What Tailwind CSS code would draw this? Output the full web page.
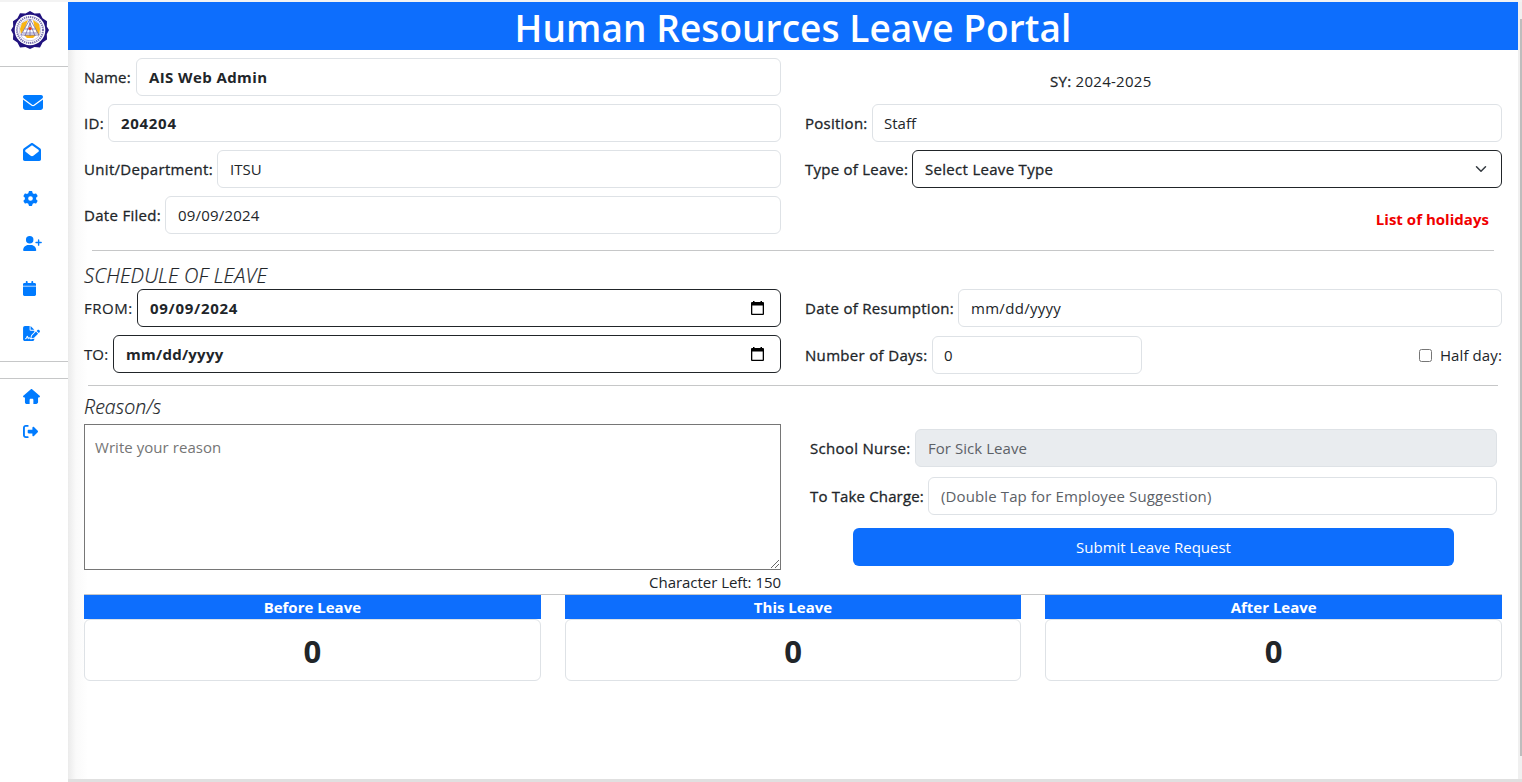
<!DOCTYPE html>
<html lang="en">
<head>
<meta charset="utf-8">
<title>Human Resources Leave Portal</title>
<script src="https://cdn.jsdelivr.net/npm/@tailwindcss/browser@4"></script>
</head>
<body class="h-[782px] w-[1522px] overflow-hidden bg-white font-['Open_Sans','Noto_Sans',sans-serif] text-[15px] leading-6 text-[#212529]">
<div class="flex h-full">
  <aside class="flex w-[68px] shrink-0 flex-col border-t-2 border-[#f3f3f3]">
    <div class="flex h-[65px] items-start border-b border-[#c6c7c8] pt-[9px] pl-[11px]">
      <svg class="size-[38px]" viewBox="0 0 38 38">
        <path fill="#21127f" d="M19 0l4.500 2.600 5.500-.3 2.600 4.900 4.400 3-.2 5.300L38 19l-2.200 4.200.2 5.300-4.400 3-2.600 4.900-5.500-.3L19 38l-4.500-1.900-5.500.3-2.600-4.900-4.400-3 .2-5.300L0 19l2.200-3.500-.2-5.300 4.400-3L9 2.300l5.500.3z"/>
        <circle cx="19" cy="19" r="15.300" fill="#fff"/>
        <circle cx="19" cy="19" r="13" fill="none" stroke="#7a72b0" stroke-width="2" stroke-dasharray="1.300 .8"/>
        <circle cx="19" cy="19" r="10.800" fill="#fff" stroke="#a49dcb" stroke-width=".6"/>
        <path fill="#f9b515" d="M11 12l6-3-3 8-4 6-1-5zM22 9l6 4 1 5-1 7-3-5-2-6zM13 24h12l-3 3h-6z"/>
        <path fill="none" stroke="#7269aa" stroke-width=".8" d="M19 8l-9 16h18zM19 9v16M14 18h10M12 22h14M19 12l-5 13M19 12l5 13"/>
        <circle cx="19" cy="17.500" r="1.600" fill="#e5331d"/>
      </svg>
    </div>
    <nav class="flex h-[295px] flex-col items-start border-b border-[#c6c7c8] pt-7 pl-[23px] text-[#007bff]">
      <svg class="h-[15px] w-5" viewBox="0 64 512 384" preserveAspectRatio="none" fill="currentColor"><path d="M48 64C21.500 64 0 85.500 0 112c0 15.100 7.100 29.300 19.200 38.400L236.800 313.600c11.400 8.500 27 8.500 38.400 0L492.800 150.400c12.100-9.100 19.200-23.300 19.200-38.400c0-26.500-21.500-48-48-48H48zM0 176V384c0 35.300 28.700 64 64 64H448c35.300 0 64-28.700 64-64V176L294.400 339.200c-22.800 17.100-54 17.100-76.800 0L0 176z"/></svg>
      <svg class="mt-[33px] size-[18px]" viewBox="0 0 512 512" fill="currentColor"><path d="M255.400 0c-9 0-18 2.500-26 8L28 148C10 160 0 180 0 202V464c0 26 22 48 48 48H464c26 0 48-22 48-48V202c0-22-10-42-28-54L282 8c-8-5-17-8-26.600-8zM256 64L448 198v44L294 366c-22 18-54 18-76 0L64 242V198z"/></svg>
      <svg class="mt-[30px] size-[15px]" viewBox="0 0 512 512" fill="currentColor"><path d="M495.900 166.600c3.200 8.700 .5 18.400-6.400 24.600l-43.300 39.400c1.100 8.300 1.700 16.800 1.700 25.400s-.6 17.100-1.700 25.400l43.300 39.400c6.900 6.200 9.600 15.900 6.400 24.600c-4.400 11.900-9.700 23.300-15.800 34.300l-4.700 8.100c-6.600 11-14 21.400-22.100 31.200c-5.900 7.200-15.700 9.600-24.500 6.800l-55.700-17.700c-13.400 10.300-28.200 18.900-44 25.400l-12.500 57.100c-2 9.100-9 16.300-18.200 17.800c-13.800 2.300-28 3.500-42.500 3.500s-28.700-1.200-42.500-3.500c-9.200-1.500-16.200-8.700-18.200-17.800l-12.500-57.100c-15.800-6.500-30.600-15.100-44-25.400L83.100 425.900c-8.800 2.800-18.600 .3-24.500-6.800c-8.100-9.800-15.500-20.200-22.100-31.200l-4.700-8.100c-6.100-11-11.400-22.400-15.800-34.300c-3.200-8.700-.5-18.400 6.400-24.600l43.300-39.400C64.600 273.100 64 264.600 64 256s.6-17.100 1.700-25.400L22.400 191.200c-6.900-6.200-9.600-15.900-6.400-24.600c4.400-11.900 9.700-23.300 15.800-34.300l4.700-8.100c6.600-11 14-21.400 22.100-31.200c5.900-7.200 15.700-9.600 24.500-6.800l55.700 17.700c13.400-10.300 28.200-18.900 44-25.400l12.500-57.100c2-9.100 9-16.300 18.200-17.800C227.300 1.200 241.500 0 256 0s28.700 1.200 42.500 3.500c9.200 1.500 16.200 8.700 18.200 17.800l12.500 57.100c15.800 6.500 30.600 15.100 44 25.400l55.700-17.700c8.800-2.800 18.600-.3 24.500 6.800c8.100 9.800 15.500 20.200 22.100 31.200l4.700 8.100c6.100 11 11.400 22.400 15.800 34.300zM256 336a80 80 0 1 0 0-160 80 80 0 1 0 0 160z"/></svg>
      <svg class="mt-[30px] h-[15px] w-[19px]" viewBox="0 0 640 512" fill="currentColor"><path d="M96 128a128 128 0 1 1 256 0A128 128 0 1 1 96 128zM0 482.300C0 383.800 79.800 304 178.300 304h91.400C368.200 304 448 383.800 448 482.300c0 16.400-13.300 29.700-29.700 29.700H29.700C13.300 512 0 498.700 0 482.300zM504 312V248H440c-13.300 0-24-10.700-24-24s10.700-24 24-24h64V136c0-13.300 10.700-24 24-24s24 10.700 24 24v64h64c13.300 0 24 10.700 24 24s-10.700 24-24 24H552v64c0 13.300-10.700 24-24 24s-24-10.700-24-24z"/></svg>
      <svg class="mt-[30px] h-[15px] w-[13px]" viewBox="0 0 448 512" preserveAspectRatio="none" fill="currentColor"><path d="M96 32V64H48C21.500 64 0 85.500 0 112v48H448V112c0-26.500-21.500-48-48-48H352V32c0-17.700-14.300-32-32-32s-32 14.300-32 32V64H160V32c0-17.700-14.300-32-32-32S96 14.300 96 32zM448 192H0V464c0 26.500 21.500 48 48 48H400c26.500 0 48-21.500 48-48V192z"/><path opacity=".5" d="M0 160h448v32H0z"/></svg>
      <svg class="mt-[30px] h-[15px] w-[17px]" viewBox="0 0 576 512" fill="currentColor"><path d="M64 0C28.700 0 0 28.700 0 64V448c0 35.300 28.700 64 64 64H320c35.300 0 64-28.700 64-64V428.700c-2.700 1.100-5.400 2-8.200 2.700l-60.100 15c-3 .7-6 1.200-9 1.400c-.9 .1-1.800 .2-2.700 .2H240c-6.100 0-11.600-3.400-14.300-8.800l-8.800-17.700c-1.700-3.400-5.100-5.500-8.800-5.500s-7.200 2.100-8.800 5.500l-8.800 17.700c-2.900 5.900-9.200 9.400-15.700 8.800s-12.100-5.100-13.900-11.300L144 381l-9.800 32.800c-6.100 20.300-24.800 34.200-46 34.200H80c-8.800 0-16-7.200-16-16s7.200-16 16-16h8.200c7.100 0 13.300-4.600 15.300-11.400l14.900-49.500c3.400-11.300 13.800-19.100 25.600-19.100s22.200 7.800 25.600 19.100l11.600 38.600c7.400-6.200 16.800-9.700 26.800-9.700c15.900 0 30.400 9 37.500 23.200l4.400 8.800h8.900c-3.100-8.800-3.700-18.400-1.400-27.800l15-60.100c2.800-11.300 8.600-21.500 16.800-29.700L384 203.600V160H256c-17.700 0-32-14.300-32-32V0H64zM256 0V128H384L256 0zM549.800 139.700c-15.600-15.600-40.900-15.600-56.600 0l-29.400 29.400 71 71 29.400-29.400c15.600-15.600 15.600-40.900 0-56.600l-14.400-14.400zM311.900 321c-4.100 4.100-7 9.200-8.400 14.900l-15 60.100c-1.400 5.500 .2 11.200 4.200 15.200s9.700 5.600 15.200 4.200l60.100-15c5.600-1.400 10.800-4.300 14.900-8.400L512.100 262.700l-71-71L311.900 321z"/></svg>
    </nav>
    <nav class="mt-4 flex flex-col items-start gap-5 border-t border-[#c6c7c8] pt-[10px] pl-[23px] text-[#007bff]">
      <svg class="h-[15px] w-[17px]" viewBox="0 0 576 512" fill="currentColor"><path d="M575.800 255.500c0 18-15 32.100-32 32.100h-32l.7 160.200c0 35-28 64.200-64 64.200H352V376c0-22-18-40-40-40h-48c-22 0-40 18-40 40V512H128c-36 0-64-28-64-64V287.600H32c-18 0-32-14-32-32.100c0-9 3-17 10-24L266.400 8c7-7 15-8 22-8s15 2 21 7L564.800 231.500c8 7 12 15 11 24z"/></svg>
      <svg class="size-[15px]" viewBox="0 0 512 512" fill="currentColor"><path d="M502.600 278.600c12.500-12.500 12.500-32.800 0-45.300l-128-128c-22-22-54-8-54 22.700v64H192c-17.700 0-32 14.300-32 32v64c0 17.700 14.300 32 32 32H320v64c0 30 34 43 54 22zM160 96c17.700 0 32-14.300 32-32s-14.300-32-32-32H96C43 32 0 75 0 128V384c0 53 43 96 96 96h64c17.700 0 32-14.300 32-32s-14.300-32-32-32H96c-17.700 0-32-14.300-32-32V128c0-17.700 14.300-32 32-32h64z"/></svg>
    </nav>
  </aside>

  <div class="flex grow flex-col border-t-2 border-[#f3f3f3]">
    <div class="flex grow">
      <main class="flex w-[1450px] flex-col bg-white bg-linear-to-r from-[#ebebeb] via-[#fafafa] via-[8px] to-white to-[20px]">
        <h1 class="h-12 bg-[#0d6efd] pt-px text-center text-[37px] leading-[50px] font-semibold tracking-[0.07px] text-white">Human Resources Leave Portal</h1>
        <div class="px-4">
          <div class="grid grid-cols-2 gap-x-6 pt-2">
            <div class="flex flex-col gap-2">
              <div class="flex h-[38px] items-center"><span class="w-[52px] shrink-0 whitespace-nowrap tracking-[0.2px] [-webkit-text-stroke:0.3px]">Name:</span><div class="flex h-full grow items-center rounded-md border border-[#dee2e6] bg-white px-3 font-bold tracking-[0.4px]">AIS Web Admin</div></div>
              <div class="flex h-[38px] items-center"><span class="w-6 shrink-0 whitespace-nowrap tracking-[0.3px] [-webkit-text-stroke:0.3px]">ID:</span><div class="flex h-full grow items-center rounded-md border border-[#dee2e6] bg-white px-3 font-bold tracking-[0.7px]">204204</div></div>
              <div class="flex h-[38px] items-center"><span class="w-[133px] shrink-0 whitespace-nowrap tracking-[0.32px] [-webkit-text-stroke:0.3px]">Unit/Department:</span><div class="flex h-full grow items-center rounded-md border border-[#dee2e6] bg-white px-3">ITSU</div></div>
              <div class="flex h-[38px] items-center"><span class="w-[81px] shrink-0 whitespace-nowrap tracking-[0.3px] [-webkit-text-stroke:0.3px]">Date Filed:</span><div class="flex h-full grow items-center rounded-md border border-[#dee2e6] bg-white px-3 tracking-[0.2px]">09/09/2024</div></div>
            </div>
            <div class="flex flex-col gap-2">
              <div class="flex h-[38px] items-center pt-2 pl-[245px] tracking-[0.28px] whitespace-pre"><span class="[-webkit-text-stroke:0.3px]">SY: </span>2024-2025</div>
              <div class="flex h-[38px] items-center"><span class="w-[67px] shrink-0 whitespace-nowrap tracking-[0.25px] [-webkit-text-stroke:0.3px]">Position:</span><div class="flex h-full grow items-center rounded-md border border-[#dee2e6] bg-white px-[11px]">Staff</div></div>
              <div class="flex h-[38px] items-center"><span class="w-[107px] shrink-0 whitespace-nowrap tracking-[0.25px] [-webkit-text-stroke:0.3px]">Type of Leave:</span><div class="flex h-full grow items-center justify-between rounded-md border border-[#212529] bg-white px-3"><span class="tracking-[0.3px] [-webkit-text-stroke:0.3px]">Select Leave Type</span><svg class="mr-0.5 size-3" viewBox="0 0 16 16" fill="none" stroke="#343a40" stroke-width="2" stroke-linecap="round" stroke-linejoin="round"><path d="m2 5 6 6 6-6"/></svg></div></div>
              <div class="flex h-[38px] items-center justify-end pt-2 pr-[13px] font-bold tracking-[0.03px] text-[#f00000]">List of holidays</div>
            </div>
          </div>
          <hr class="mx-2 mt-4 border-[#c6c7c8]">
          <h2 class="mt-3 h-[26px] text-[20px] leading-[26px] font-light italic tracking-[0.15px] [-webkit-text-stroke:0.2px]">SCHEDULE OF LEAVE</h2>
          <div class="grid grid-cols-2 gap-x-6">
            <div class="flex flex-col gap-2">
              <div class="flex h-[38px] items-center"><span class="w-[53px] shrink-0 whitespace-nowrap tracking-[0.5px] [-webkit-text-stroke:0.15px]">FROM:</span><div class="flex h-full grow items-center justify-between rounded-md border border-[#212529] bg-white pl-3 pr-4 font-bold"><span class="tracking-[0.7px]">09/09/2024</span><svg class="h-[14px] w-[13px]" viewBox="0 0 13 14"><path fill-rule="evenodd" d="M2 0h1.500v1h6V0H11v1h1q1 0 1 1v11q0 1-1 1H1q-1 0-1-1V2q0-1 1-1h1zM1.300 4.500v8.200h10.400V4.500z"/></svg></div></div>
              <div class="flex h-[38px] items-center"><span class="w-[29px] shrink-0 whitespace-nowrap tracking-[0.1px] [-webkit-text-stroke:0.15px]">TO:</span><div class="flex h-full grow items-center justify-between rounded-md border border-[#212529] bg-white pl-3 pr-4 font-bold"><span class="tracking-[0.25px]">mm/dd/yyyy</span><svg class="h-[14px] w-[13px]" viewBox="0 0 13 14"><path fill-rule="evenodd" d="M2 0h1.500v1h6V0H11v1h1q1 0 1 1v11q0 1-1 1H1q-1 0-1-1V2q0-1 1-1h1zM1.300 4.500v8.200h10.400V4.500z"/></svg></div></div>
            </div>
            <div class="flex flex-col gap-[9px]">
              <div class="flex h-[38px] items-center"><span class="w-[153px] shrink-0 whitespace-nowrap tracking-[0.3px] [-webkit-text-stroke:0.3px]">Date of Resumption:</span><div class="flex h-full grow items-center rounded-md border border-[#dee2e6] bg-white px-3 tracking-[0.3px]">mm/dd/yyyy</div></div>
              <div class="flex h-[38px] items-center"><span class="w-[127px] shrink-0 whitespace-nowrap tracking-[0.32px] [-webkit-text-stroke:0.3px]">Number of Days:</span><div class="flex h-full w-[210px] items-center rounded-md border border-[#dee2e6] bg-white px-[11px]">0</div><span class="mr-2 ml-auto size-[13px] rounded-[2.500px] border border-[#767676]"></span><span class="tracking-[0.11px]">Half day:</span></div>
            </div>
          </div>
          <hr class="mx-1 mt-[11px] border-[#c6c7c8]">
          <div class="flex gap-6">
            <div class="w-[697px]">
              <h2 class="mt-2 h-[30px] text-[19.500px] leading-[26px] font-light italic tracking-[0.1px] [-webkit-text-stroke:0.2px]">Reason/s</h2>
              <div class="relative h-[146px] border border-[#767676] bg-white px-[10px] pt-[10px] tracking-[0.05px] text-[#757575]">Write your reason
                <svg class="absolute right-px bottom-px size-2" viewBox="0 0 8 8" stroke="#555" stroke-width=".9"><path d="M0 8 8 0M4 8l4-4"/></svg>
              </div>
              <p class="h-6 text-right tracking-[-0.04px]">Character Left: 150</p>
            </div>
            <div class="flex w-[697px] flex-col gap-[10px] px-[5px] pt-[43px]">
              <div class="flex h-[38px] items-center"><span class="w-[105px] shrink-0 whitespace-nowrap tracking-[0.3px] [-webkit-text-stroke:0.3px]">School Nurse:</span><div class="flex h-full grow items-center rounded-md border border-[#dee2e6] bg-[#e9ecef] px-3 tracking-[0.05px] text-[#5c6167]">For Sick Leave</div></div>
              <div class="flex h-[38px] items-center"><span class="w-[118px] shrink-0 whitespace-nowrap tracking-[0.15px] [-webkit-text-stroke:0.3px]">To Take Charge:</span><div class="flex h-full grow items-center rounded-md border border-[#dee2e6] bg-white px-3 tracking-[0.12px] text-[#5c6167]">(Double Tap for Employee Suggestion)</div></div>
              <div class="mx-[43px] mt-[3px] flex h-[38px] items-center justify-center rounded-md bg-[#0d6efd] text-white">Submit Leave Request</div>
            </div>
          </div>
          <div class="grid grid-cols-3 gap-6 border-t border-[#c6c7c8] text-center font-bold">
            <div><div class="h-6 bg-[#0d6efd] text-white">Before Leave</div><div class="h-[62px] rounded-md border border-[#dee2e6] bg-white text-[31px] leading-[62px]">0</div></div>
            <div><div class="h-6 bg-[#0d6efd] text-white">This Leave</div><div class="h-[62px] rounded-md border border-[#dee2e6] bg-white text-[31px] leading-[62px]">0</div></div>
            <div><div class="h-6 bg-[#0d6efd] text-white">After Leave</div><div class="h-[62px] rounded-md border border-[#dee2e6] bg-white text-[31px] leading-[62px]">0</div></div>
          </div>
        </div>
      </main>
      <div class="flex w-1 justify-end bg-[#f0f0f0] pt-[17px]"><div class="h-[737px] w-0.5 bg-[#bdbdbd]"></div></div>
    </div>
    <div class="h-[3px] shrink-0 bg-[#e0e0e0]"></div>
  </div>
</div>
</body>
</html>
